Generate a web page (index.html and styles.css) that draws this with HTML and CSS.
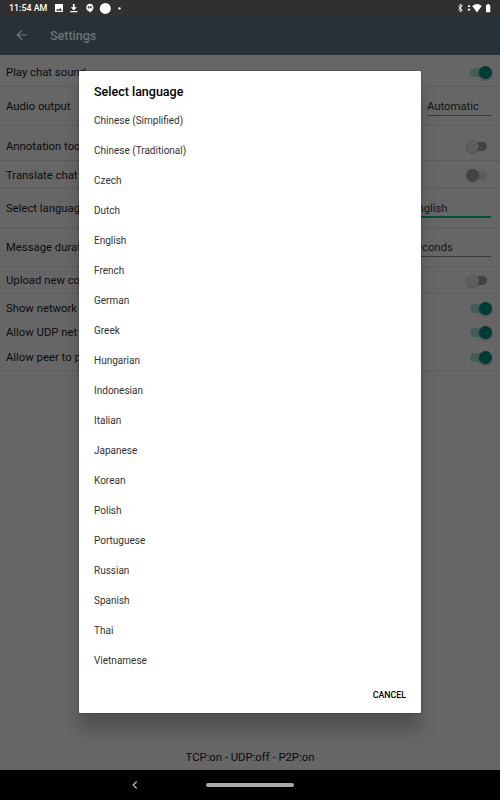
FILE: index.html
```
<!DOCTYPE html>
<html lang="en">
<head>
<meta charset="utf-8">
<title>Settings</title>
<link rel="stylesheet" href="styles.css">
</head>
<body>
<div class="screen">
  <div class="status">
    <span class="time">11:54 AM</span>
    <svg class="notes" width="70" height="14" viewBox="0 0 70 14" fill="#fff">
      <path fill-rule="evenodd" d="M1 3h8v8H1zM2 9.700h6L6.200 7 4.600 8.800 3.500 7.800z"/>
      <path d="M18.900 3h1.700v3.300h2.200l-3.050 3.100-3.050-3.100h2.200zM16.200 10h7.200v1.200h-7.200z"/>
      <path fill-rule="evenodd" d="M35.500 2.700a3.900 3.900 0 0 1 3.900 3.900c0 2.200-1.500 3.900-3.700 5.100v-1.300a3.900 3.900 0 0 1-.2-7.700zM33.700 5.300v1.600h.8l-.3.800h.6l.5-.8V5.300zM36 5.300v1.600h.8l-.3.800h.6l.5-.8V5.300z"/>
      <circle cx="51.300" cy="7.400" r="5.500"/><circle cx="65.500" cy="7.400" r="1.200"/>
    </svg>
    <svg class="system" width="36" height="14" viewBox="0 0 36 14" fill="#fff">
      <path fill="none" stroke="#fff" stroke-width=".9" d="M1.200 5l4.100 4-2 2V3l2 2-4.100 4"/>
      <path d="M12 3.500l1.500 2.600h-3zM12 10.500l1.500-2.700h-3zM15.200 5q5-3.800 9.500 0L20 11.400zM29 4h1.200V3h2v1h1.100v7.300H29z"/>
    </svg>
  </div>
  <header class="bar">
    <svg width="12" height="12" viewBox="0 0 12 12" fill="none" stroke="#74797c" stroke-width="1.200"><path d="M11 6H1.500M6 1.300L1.300 6 6 10.700"/></svg>
    <span>Settings</span>
  </header>
  <main class="settings">
    <div class="row r32 low"><span>Play chat sound</span><i class="switch on"></i></div>
    <div class="row r39"><span>Audio output</span><span class="field auto">Automatic</span></div>
    <div class="row r35 lower"><span>Annotation tools</span><i class="switch light"></i></div>
    <div class="row r28"><span>Translate chat</span><i class="switch dim"></i></div>
    <div class="row r39"><span>Select language</span><span class="field lang">English</span></div>
    <div class="row r39"><span>Message duration</span><span class="field duration">5 seconds</span></div>
    <div class="row r27"><span>Upload new co</span><i class="switch light"></i></div>
    <div class="group">
      <div class="line"><span>Show network</span><i class="switch on"></i></div>
      <div class="line"><span>Allow UDP net</span><i class="switch on"></i></div>
      <div class="line"><span>Allow peer to p</span><i class="switch on"></i></div>
    </div>
  </main>
  <footer class="net">TCP:on - UDP:off - P2P:on</footer>
  <nav class="nav">
    <svg width="8" height="10" viewBox="0 0 8 10" fill="none" stroke="#bbb" stroke-width="1.200"><path d="M5.700 1.500L2.200 5l3.500 3.500"/></svg>
    <span class="pill"></span>
  </nav>
  <section class="dialog" role="dialog">
    <h1>Select language</h1>
    <ul>
      <li>Chinese (Simplified)</li><li>Chinese (Traditional)</li><li>Czech</li><li>Dutch</li><li>English</li><li>French</li><li>German</li><li>Greek</li><li>Hungarian</li><li>Indonesian</li><li>Italian</li><li>Japanese</li><li>Korean</li><li>Polish</li><li>Portuguese</li><li>Russian</li><li>Spanish</li><li>Thai</li><li>Vietnamese</li>
    </ul>
    <div class="actions">CANCEL</div>
  </section>
</div>
</body>
</html>
```
FILE: styles.css
```
* { box-sizing: border-box; }
body { margin: 0; font-family: Roboto, sans-serif; }
.screen {
  position: relative;
  width: 500px;
  height: 800px;
  display: flex;
  flex-direction: column;
  overflow: hidden;
  background: #666;
  color: #0c0c0c;
  font-size: 11.3px;
}
.status {
  height: 15px;
  flex: none;
  display: flex;
  align-items: center;
  padding: 0 7px 0 9px;
  background: #303030;
  color: #fff;
}
.time { width: 45px; font-size: 8.900px; font-weight: 500; white-space: nowrap; }
.notes { display: block; }
.system { display: block; margin-left: auto; }
.bar {
  height: 40px;
  flex: none;
  display: flex;
  align-items: center;
  gap: 22px;
  padding-left: 16px;
  background: #263139;
  color: #6f7478;
  font-size: 12.5px;
  font-weight: 500;
}
.settings { flex: 1; }
.row, .line {
  display: flex;
  align-items: center;
  justify-content: space-between;
  padding: 0 9px 0 6px;
  white-space: nowrap;
}
.row { border-bottom: 1px solid #5b5b5b; }
.r27 { height: 27px; }
.r28 { height: 28px; padding-top: 1px; }
.r32 { height: 32px; }
.r35 { height: 35px; }
.r39 { height: 39px; }
.low { padding-top: 4px; }
.lower { padding-top: 7px; }
.group { height: 77px; padding-top: 2px; border-bottom: 1px solid #5b5b5b; }
.line { height: 24.500px; }
.switch {
  position: relative;
  width: 21px;
  height: 9px;
  border-radius: 5px;
  background: #435e5a;
}
.switch::after {
  content: "";
  position: absolute;
  top: -2px;
  left: 8.500px;
  width: 13px;
  height: 13px;
  border-radius: 50%;
  background: #003c34;
  box-shadow: 0 1px 2px rgba(0, 0, 0, .35);
}
.switch.light, .switch.dim { margin-right: 4px; background: #424242; }
.switch.light::after { left: 0; background: #5e5e5e; box-shadow: 0 1px 1px rgba(0, 0, 0, .2); }
.switch.dim { background: #5a5a5a; }
.switch.dim::after { left: 0; background: #434343; box-shadow: none; }
.field { height: 19px; line-height: 19px; border-bottom: 1px solid #3a3a3a; color: #151515; }
.auto { width: 64px; }
.lang { width: 80px; border-bottom: 2px solid #004d43; }
.duration { width: 90px; }
.net { height: 26px; line-height: 27px; text-align: center; }
.nav {
  height: 30px;
  flex: none;
  display: flex;
  align-items: center;
  padding-left: 131px;
  gap: 67px;
  background: #000;
}
.pill { width: 88px; height: 4px; border-radius: 2px; background: #aaa; }
.dialog {
  position: absolute;
  left: 79px;
  top: 71px;
  width: 342px;
  height: 642px;
  display: flex;
  flex-direction: column;
  background: #fff;
  border-radius: 1px;
  box-shadow: 0 0 2px rgba(0, 0, 0, .5), 0 18px 16px 0 rgba(0, 0, 0, .2);
}
h1 { margin: 0; padding: 6px 15px 0; height: 35px; line-height: 29px; font-size: 12.500px; font-weight: 500; color: #000; }
ul { margin: 0; padding: 0 15px; list-style: none; flex: 1; }
li { height: 30px; line-height: 30px; font-size: 10px; color: #333; }
.actions { padding: 0 15px; height: 38px; line-height: 38px; text-align: right; font-size: 8.800px; font-weight: 500; color: #000; }
```
